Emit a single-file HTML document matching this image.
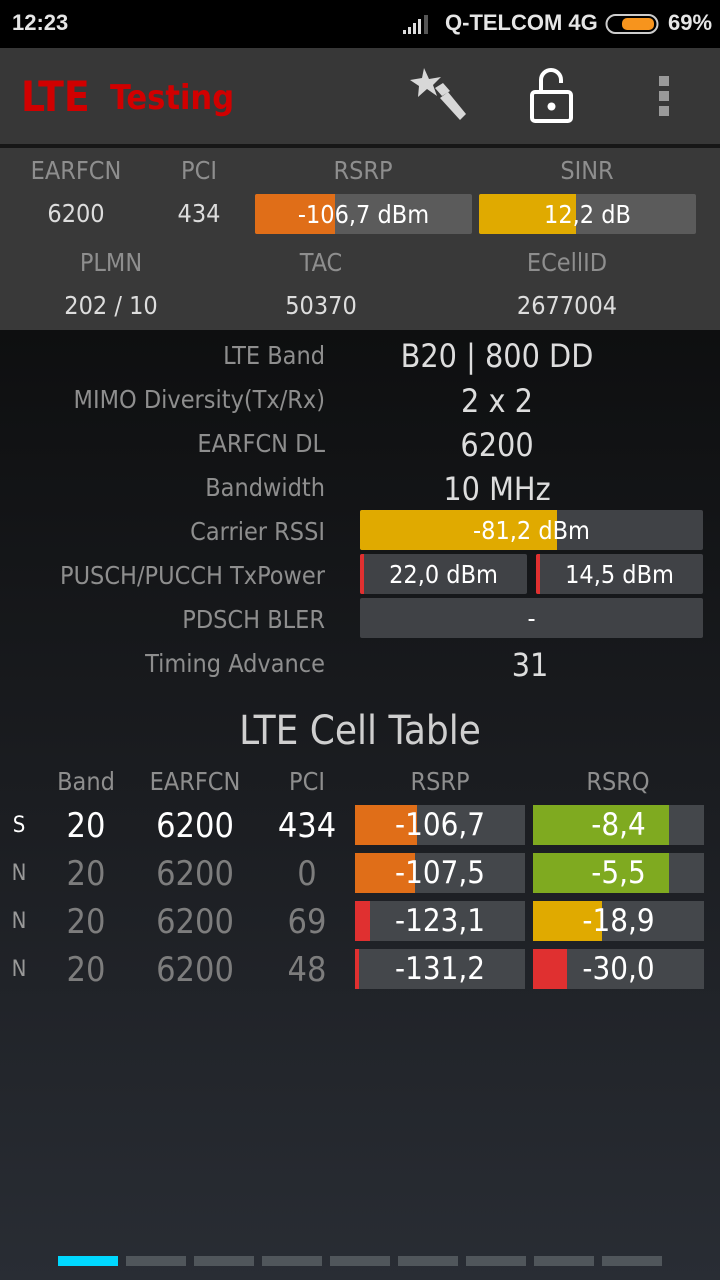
<!DOCTYPE html>
<html><head><meta charset="utf-8"><style>
*{margin:0;padding:0;box-sizing:border-box}
body{width:720px;height:1280px;overflow:hidden;position:relative;background:linear-gradient(#0e0f10 330px,#1b1d21 800px,#292d34 1280px);font-family:"Liberation Sans Narrow","DejaVu Sans Condensed","Liberation Sans",sans-serif;color:#e8e8e8}
.a{position:absolute;white-space:nowrap}
.c{text-align:center;transform:translateX(-50%)}
.r{text-align:right}
.lbl{color:#8e8e8e;font-size:25px}
.bar{position:absolute;overflow:hidden}
.bar .f{position:absolute;left:0;top:0;bottom:0}
.bar span{position:absolute;left:0;right:0;top:0;bottom:0;display:flex;align-items:center;justify-content:center;color:#fff}
</style></head><body>
<div class="a" style="left:0;top:0;width:720px;height:48px;background:#000"></div>
<div class="a" style="left:12px;top:10px;font:bold 22px 'Liberation Sans',sans-serif;color:#e6e6e6">12:23</div>
<svg class="a" style="left:403px;top:14px" width="30" height="22"><rect x="0" y="16" width="3" height="4" fill="#ddd"/><rect x="5" y="13" width="3" height="7" fill="#ddd"/><rect x="10" y="9" width="3" height="11" fill="#ddd"/><rect x="15" y="5" width="3" height="15" fill="#ddd"/><rect x="21" y="1" width="4" height="19" fill="#555"/></svg>
<div class="a" style="left:445px;top:10px;font:bold 22px 'Liberation Sans',sans-serif;color:#e6e6e6">Q-TELCOM 4G</div>
<svg class="a" style="left:605px;top:12px" width="54" height="24"><rect x="1.5" y="3" width="51" height="18" rx="9" fill="none" stroke="#ccc" stroke-width="2"/><rect x="17" y="6" width="32" height="12" rx="5" fill="#f7941d"/></svg>
<div class="a" style="left:668px;top:10px;font:bold 22px 'Liberation Sans',sans-serif;color:#e6e6e6">69%</div>
<div class="a" style="left:0;top:48px;width:720px;height:96px;background:#373737"></div>
<div class="a" style="left:0;top:144px;width:720px;height:4px;background:#161616"></div>
<div class="a" style="left:21px;top:74px;font-size:42px;color:#d10000;line-height:46px;font-weight:bold">LTE</div>
<div class="a" style="left:110px;top:78px;font-size:34px;color:#d10000;font-weight:bold;line-height:40px">Testing</div>
<svg class="a" style="left:410px;top:66px" width="62" height="60" viewBox="0 0 62 60"><polygon points="14,2 19,13 31,11 23,19 27,30 17,23 8,31 9,20 0,14 12,12" fill="#d8d8d8"/><polygon points="25,22 33,17 40,25 32,30" fill="#d8d8d8"/><polygon points="30,32 38,26 56,48 50,54" fill="#d8d8d8"/></svg>
<svg class="a" style="left:529px;top:66px" width="46" height="58" viewBox="0 0 46 58"><path d="M12 24 V14 a10 10 0 0 1 20 0 v3" fill="none" stroke="#fff" stroke-width="4"/><rect x="3" y="26" width="39" height="29" rx="3" fill="none" stroke="#fff" stroke-width="4"/><circle cx="22.5" cy="40.5" r="4" fill="#fff"/></svg>
<div class="a" style="left:659px;top:76px;width:10px;height:10px;background:#9a9a9a"></div>
<div class="a" style="left:659px;top:91px;width:10px;height:10px;background:#9a9a9a"></div>
<div class="a" style="left:659px;top:106px;width:10px;height:10px;background:#9a9a9a"></div>
<div class="a" style="left:0;top:148px;width:720px;height:182px;background:#393939"></div>
<div class="a c lbl" style="left:76px;top:156px">EARFCN</div>
<div class="a c lbl" style="left:199px;top:156px">PCI</div>
<div class="a c lbl" style="left:363px;top:156px">RSRP</div>
<div class="a c lbl" style="left:587px;top:156px">SINR</div>
<div class="a c" style="left:76px;top:199px;font-size:25px;color:#ddd">6200</div>
<div class="a c" style="left:199px;top:199px;font-size:25px;color:#ddd">434</div>
<div class="bar" style="left:255px;top:194px;width:217px;height:40px;background:#5b5b5b;border-radius:2px"><div class="f" style="width:80px;background:#e06e18"></div><span style="font-size:25px">-106,7 dBm</span></div>
<div class="bar" style="left:479px;top:194px;width:217px;height:40px;background:#5b5b5b;border-radius:2px"><div class="f" style="width:97px;background:#e0aa00"></div><span style="font-size:25px">12,2 dB</span></div>
<div class="a c lbl" style="left:111px;top:248px">PLMN</div>
<div class="a c lbl" style="left:321px;top:248px">TAC</div>
<div class="a c lbl" style="left:567px;top:248px">ECellID</div>
<div class="a c" style="left:111px;top:291px;font-size:25px;color:#ddd">202 / 10</div>
<div class="a c" style="left:321px;top:291px;font-size:25px;color:#ddd">50370</div>
<div class="a c" style="left:567px;top:291px;font-size:25px;color:#ddd">2677004</div>
<div class="a r lbl" style="right:395px;top:341px">LTE Band</div>
<div class="a r lbl" style="right:395px;top:385px">MIMO Diversity(Tx/Rx)</div>
<div class="a r lbl" style="right:395px;top:429px">EARFCN DL</div>
<div class="a r lbl" style="right:395px;top:473px">Bandwidth</div>
<div class="a r lbl" style="right:395px;top:517px">Carrier RSSI</div>
<div class="a r lbl" style="right:395px;top:561px">PUSCH/PUCCH TxPower</div>
<div class="a r lbl" style="right:395px;top:605px">PDSCH BLER</div>
<div class="a r lbl" style="right:395px;top:649px">Timing Advance</div>
<div class="a c" style="left:497px;top:337px;font-size:32px;color:#ddd">B20 | 800 DD</div>
<div class="a c" style="left:497px;top:382px;font-size:32px;color:#ddd">2 x 2</div>
<div class="a c" style="left:497px;top:426px;font-size:32px;color:#ddd">6200</div>
<div class="a c" style="left:497px;top:470px;font-size:32px;color:#ddd">10 MHz</div>
<div class="bar" style="left:360px;top:510px;width:343px;height:40px;background:#404246;border-radius:2px"><div class="f" style="width:197px;background:#e0aa00"></div><span style="font-size:25px">-81,2 dBm</span></div>
<div class="bar" style="left:360px;top:554px;width:167px;height:40px;background:#404246;border-radius:2px"><div class="f" style="width:4px;background:#e03030"></div><span style="font-size:25px">22,0 dBm</span></div>
<div class="bar" style="left:536px;top:554px;width:167px;height:40px;background:#404246;border-radius:2px"><div class="f" style="width:4px;background:#e03030"></div><span style="font-size:25px">14,5 dBm</span></div>
<div class="bar" style="left:360px;top:598px;width:343px;height:40px;background:#404246;border-radius:2px"><span style="font-size:25px">-</span></div>
<div class="a c" style="left:530px;top:646px;font-size:32px;color:#ddd">31</div>
<div class="a c" style="left:360px;top:708px;font-size:40px;color:#cfcfcf">LTE Cell Table</div>
<div class="a c lbl" style="left:86px;top:767px">Band</div>
<div class="a c lbl" style="left:195px;top:767px">EARFCN</div>
<div class="a c lbl" style="left:307px;top:767px">PCI</div>
<div class="a c lbl" style="left:440px;top:767px">RSRP</div>
<div class="a c lbl" style="left:618px;top:767px">RSRQ</div>

<div class="a c" style="left:19px;top:813px;font-size:22px;color:#fff">S</div>
<div class="a c" style="left:86px;top:806px;font-size:34px;color:#fff">20</div>
<div class="a c" style="left:195px;top:806px;font-size:34px;color:#fff">6200</div>
<div class="a c" style="left:307px;top:806px;font-size:34px;color:#fff">434</div>
<div class="bar" style="left:355px;top:805px;width:170px;height:40px;background:#44474b"><div class="f" style="width:62px;background:#e06e18"></div><span style="font-size:31px">-106,7</span></div>
<div class="bar" style="left:533px;top:805px;width:171px;height:40px;background:#44474b"><div class="f" style="width:136px;background:#7faa20"></div><span style="font-size:31px">-8,4</span></div>

<div class="a c" style="left:19px;top:861px;font-size:22px;color:#999">N</div>
<div class="a c" style="left:86px;top:854px;font-size:34px;color:#7d7d7d">20</div>
<div class="a c" style="left:195px;top:854px;font-size:34px;color:#7d7d7d">6200</div>
<div class="a c" style="left:307px;top:854px;font-size:34px;color:#7d7d7d">0</div>
<div class="bar" style="left:355px;top:853px;width:170px;height:40px;background:#44474b"><div class="f" style="width:60px;background:#e06e18"></div><span style="font-size:31px">-107,5</span></div>
<div class="bar" style="left:533px;top:853px;width:171px;height:40px;background:#44474b"><div class="f" style="width:136px;background:#7faa20"></div><span style="font-size:31px">-5,5</span></div>

<div class="a c" style="left:19px;top:909px;font-size:22px;color:#999">N</div>
<div class="a c" style="left:86px;top:902px;font-size:34px;color:#7d7d7d">20</div>
<div class="a c" style="left:195px;top:902px;font-size:34px;color:#7d7d7d">6200</div>
<div class="a c" style="left:307px;top:902px;font-size:34px;color:#7d7d7d">69</div>
<div class="bar" style="left:355px;top:901px;width:170px;height:40px;background:#44474b"><div class="f" style="width:15px;background:#e03030"></div><span style="font-size:31px">-123,1</span></div>
<div class="bar" style="left:533px;top:901px;width:171px;height:40px;background:#44474b"><div class="f" style="width:69px;background:#e0aa00"></div><span style="font-size:31px">-18,9</span></div>

<div class="a c" style="left:19px;top:957px;font-size:22px;color:#999">N</div>
<div class="a c" style="left:86px;top:950px;font-size:34px;color:#7d7d7d">20</div>
<div class="a c" style="left:195px;top:950px;font-size:34px;color:#7d7d7d">6200</div>
<div class="a c" style="left:307px;top:950px;font-size:34px;color:#7d7d7d">48</div>
<div class="bar" style="left:355px;top:949px;width:170px;height:40px;background:#44474b"><div class="f" style="width:4px;background:#e03030"></div><span style="font-size:31px">-131,2</span></div>
<div class="bar" style="left:533px;top:949px;width:171px;height:40px;background:#44474b"><div class="f" style="width:34px;background:#e03030"></div><span style="font-size:31px">-30,0</span></div>
<div class="a" style="left:58px;top:1256px;width:60px;height:10px;background:#00d8ff"></div>
<div class="a" style="left:126px;top:1256px;width:60px;height:10px;background:#50565b"></div>
<div class="a" style="left:194px;top:1256px;width:60px;height:10px;background:#50565b"></div>
<div class="a" style="left:262px;top:1256px;width:60px;height:10px;background:#50565b"></div>
<div class="a" style="left:330px;top:1256px;width:60px;height:10px;background:#50565b"></div>
<div class="a" style="left:398px;top:1256px;width:60px;height:10px;background:#50565b"></div>
<div class="a" style="left:466px;top:1256px;width:60px;height:10px;background:#50565b"></div>
<div class="a" style="left:534px;top:1256px;width:60px;height:10px;background:#50565b"></div>
<div class="a" style="left:602px;top:1256px;width:60px;height:10px;background:#50565b"></div>
</body></html>
